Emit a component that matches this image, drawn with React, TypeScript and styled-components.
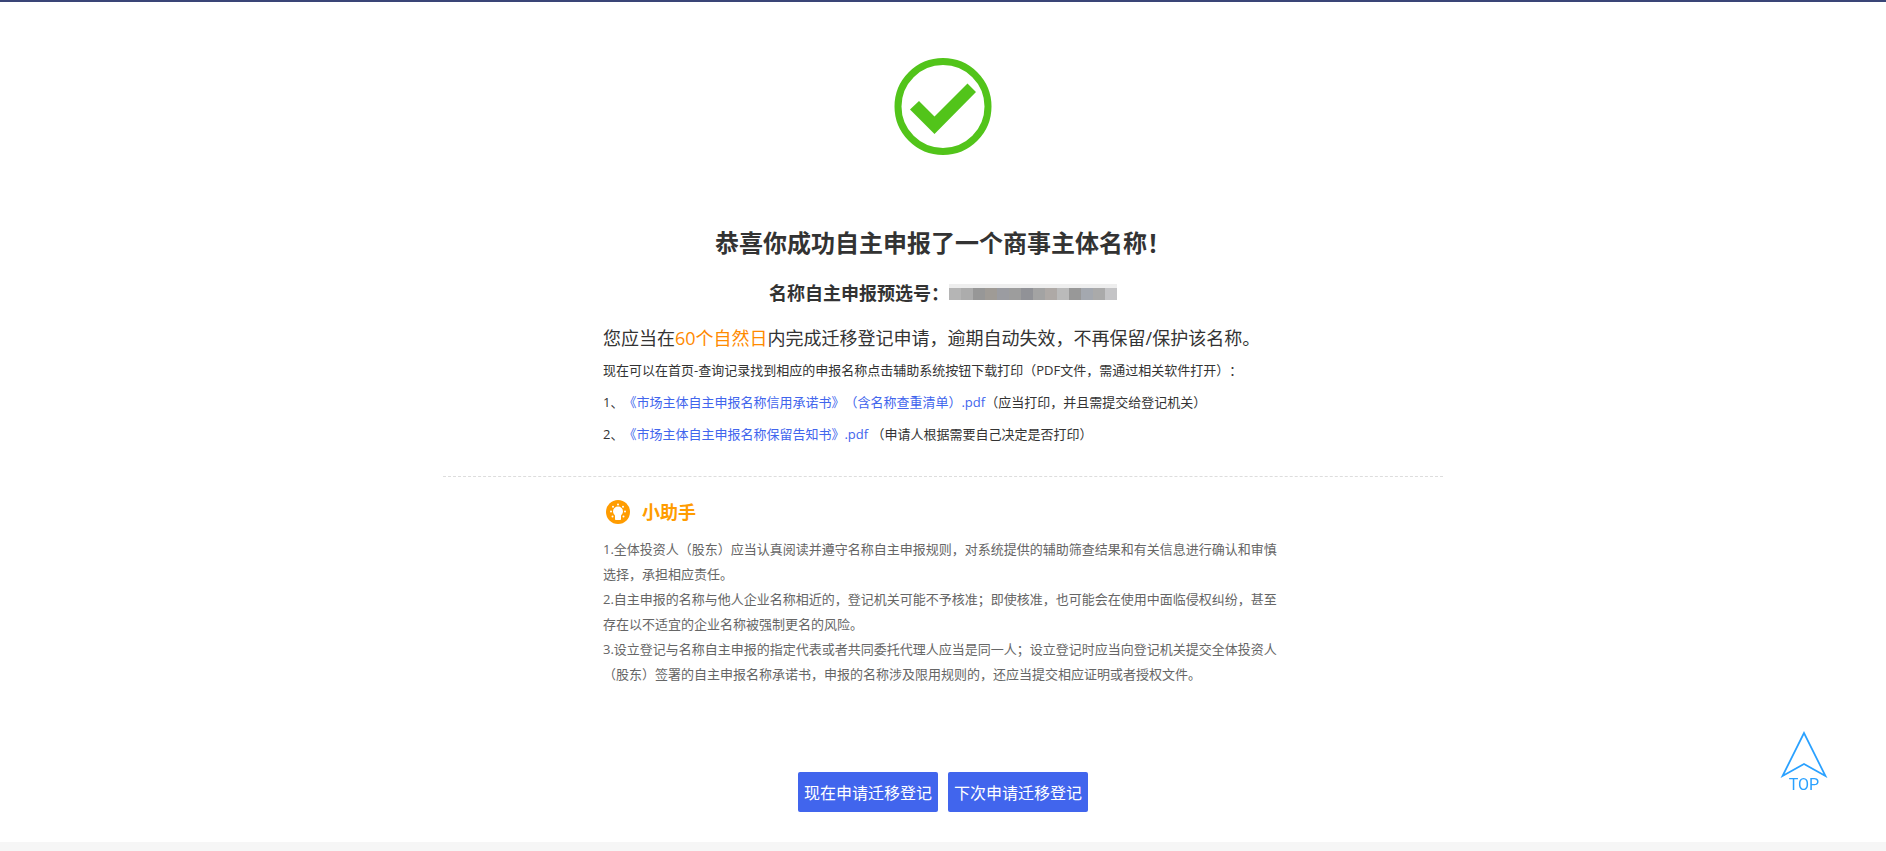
import React from 'react';
import styled, { createGlobalStyle } from 'styled-components';

const GlobalStyle = createGlobalStyle`
  * { box-sizing: border-box; }
  body {
    margin: 0;
    background: #f6f6f6;
    color: #333;
    font-family: "Open Sans", "Noto Sans CJK SC", sans-serif;
    font-size: 13px;
    text-spacing-trim: space-all;
  }
  h1, h2, p, ol { margin: 0; padding: 0; }
`;

const Page = styled.main`
  display: flex;
  flex-direction: column;
  align-items: center;
  padding: 55px 16px 30px;
  border-top: 2px solid #3a4577;
  background: #fff;
`;

const SuccessIcon = styled.svg`
  display: block;
  width: 98px;
  height: 98px;
  margin-bottom: 70px;
`;

const Title = styled.h1`
  font-size: 24px;
  line-height: 36px;
`;

const NumberLine = styled.p`
  display: flex;
  align-items: center;
  margin-top: 19px;
  font-size: 18px;
  font-weight: 700;
  line-height: 26px;
`;

const Mosaic = styled.span`
  display: flex;
  padding-bottom: 2px;
  border-top: 4px solid #eee;
`;

const Tile = styled.span<{ $tone: string }>`
  width: 12px;
  height: 12px;
  background: ${({ $tone }) => $tone};
`;

const Section = styled.section<{ $divided?: boolean }>`
  width: 100%;
  max-width: 1000px;
  padding: 0 160px;
  border-bottom: ${({ $divided }) => ($divided ? '1px dashed #ddd' : '0')};
`;

const Deadline = styled.p`
  margin-top: 16px;
  font-size: 18px;
  line-height: 32px;
`;

const Highlight = styled.span`
  color: #ff8a00;
`;

const Line = styled.p`
  line-height: 32px;
`;

const Documents = styled.ol`
  list-style: none;
  line-height: 32px;
  padding-bottom: 26px;
`;

const FileLink = styled.a`
  color: #4165ed;
  text-decoration: none;
`;

const HelperTitle = styled.h2`
  display: flex;
  align-items: center;
  gap: 12px;
  margin: 21px 0 11px;
  padding-left: 3px;
  color: #ff9c00;
  font-size: 18px;
  line-height: 28px;
`;

const Tip = styled.p`
  color: #666;
  line-height: 25px;
`;

const Actions = styled.div`
  display: flex;
  gap: 10px;
  margin-top: 85px;
`;

const ActionButton = styled.button`
  width: 140px;
  height: 40px;
  padding: 0;
  border: 0;
  border-radius: 2px;
  background: #4165ed;
  color: #fff;
  font-family: inherit;
  font-size: 16px;
  cursor: pointer;
`;

const TopButton = styled.button`
  position: fixed;
  right: 58px;
  bottom: 59px;
  display: flex;
  flex-direction: column;
  align-items: center;
  padding: 0;
  border: 0;
  background: none;
  color: #2aa1ff;
  font: 400 16px/14px Roboto, sans-serif;
  cursor: pointer;
`;

const tones = [
  '#b5b5b5', '#acacac', '#979797', '#9f9b96', '#9b9ca1', '#9d9d9d', '#919297',
  '#a3a3a3', '#aea9a6', '#bababa', '#989898', '#a4a8af', '#aaaaaa', '#c4c4c6',
];

const tips = [
  '1.全体投资人（股东）应当认真阅读并遵守名称自主申报规则，对系统提供的辅助筛查结果和有关信息进行确认和审慎选择，承担相应责任。',
  '2.自主申报的名称与他人企业名称相近的，登记机关可能不予核准；即使核准，也可能会在使用中面临侵权纠纷，甚至存在以不适宜的企业名称被强制更名的风险。',
  '3.设立登记与名称自主申报的指定代表或者共同委托代理人应当是同一人；设立登记时应当向登记机关提交全体投资人（股东）签署的自主申报名称承诺书，申报的名称涉及限用规则的，还应当提交相应证明或者授权文件。',
];

export default function App() {
  return (
    <>
      <GlobalStyle />
      <Page lang="zh-CN">
        <SuccessIcon viewBox="0 0 98 98" aria-hidden="true">
          <circle cx="49" cy="49.500" r="45" fill="none" stroke="#52c41a" strokeWidth="7" />
          <path d="M16 52.500l9-8.500 15.500 15.500L73.500 26.500l8.500 8.500L40.500 77z" fill="#52c41a" />
        </SuccessIcon>
        <Title>恭喜你成功自主申报了一个商事主体名称！</Title>
        <NumberLine>
          名称自主申报预选号：
          <Mosaic>
            {tones.map((tone) => <Tile key={tone} $tone={tone} />)}
          </Mosaic>
        </NumberLine>
        <Section $divided>
          <Deadline>
            您应当在<Highlight>60个自然日</Highlight>内完成迁移登记申请，逾期自动失效，不再保留/保护该名称。
          </Deadline>
          <Line>现在可以在首页-查询记录找到相应的申报名称点击辅助系统按钮下载打印（PDF文件，需通过相关软件打开）：</Line>
          <Documents>
            <li>1、<FileLink href="#credit">《市场主体自主申报名称信用承诺书》（含名称查重清单）.pdf</FileLink>（应当打印，并且需提交给登记机关）</li>
            <li>2、<FileLink href="#notice">《市场主体自主申报名称保留告知书》.pdf</FileLink> （申请人根据需要自己决定是否打印）</li>
          </Documents>
        </Section>
        <Section>
          <HelperTitle>
            <svg width="24" height="24" viewBox="0 0 24 24" aria-hidden="true">
              <circle cx="12" cy="12" r="12" fill="#ff9c00" />
              <path d="M12 6.500a5 5 0 0 0-5 5c0 2 1.500 3 2 4.200V19c0 .6.400 1 1 1h4c.6 0 1-.4 1-1v-3.300c.5-1.200 2-2.200 2-4.200a5 5 0 0 0-5-5z" fill="#fff" />
              <g fill="#fff">
                <circle cx="12" cy="4.500" r="1" />
                <circle cx="7" cy="6.700" r="1" />
                <circle cx="17" cy="6.700" r="1" />
                <circle cx="5" cy="11.500" r="1" />
                <circle cx="19" cy="11.500" r="1" />
                <circle cx="6.500" cy="16.500" r="1" />
                <circle cx="17.500" cy="16.500" r="1" />
              </g>
            </svg>
            小助手
          </HelperTitle>
          {tips.map((tip) => <Tip key={tip}>{tip}</Tip>)}
        </Section>
        <Actions>
          <ActionButton type="button">现在申请迁移登记</ActionButton>
          <ActionButton type="button">下次申请迁移登记</ActionButton>
        </Actions>
      </Page>
      <TopButton type="button" onClick={() => window.scrollTo({ top: 0 })}>
        <svg width="48" height="47" viewBox="0 0 48 47" fill="none" stroke="#2aa1ff" strokeWidth="1.700" aria-hidden="true">
          <path d="M24 2L2.500 45 24 33l21.500 12z" />
        </svg>
        TOP
      </TopButton>
    </>
  );
}
